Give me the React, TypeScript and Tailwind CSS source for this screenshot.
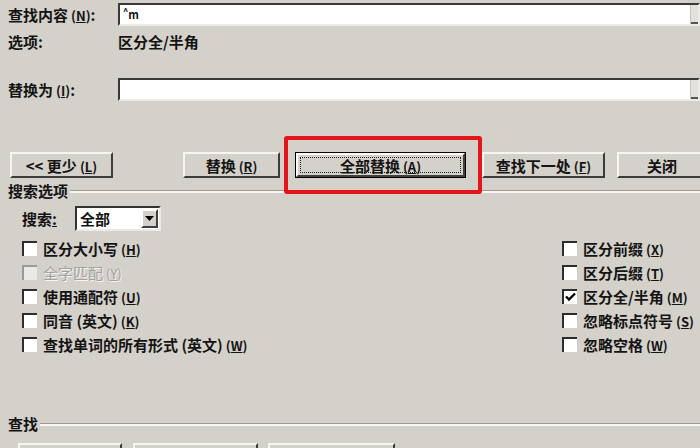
import React from "react";

// Classic Windows "查找和替换" dialog, scaled-up screenshot look.

function Key({ k }: { k: string }) {
  return (
    <span className="ml-[3px] text-[13px]">
      (<span className="underline">{k}</span>)
    </span>
  );
}

function Field({ children }: { children?: React.ReactNode }) {
  return (
    <div className="flex h-[23px] flex-1 items-stretch border-2 border-t-[#3a3a3a] border-l-[#3a3a3a] border-b-[#ecebe8] border-r-[#ecebe8] bg-white">
      <div className="flex flex-1 items-center pl-[3px] text-[11px] leading-none">{children}</div>
      <div className="w-[8px] border-l border-[#c8c4bc] bg-[#e4e1dc] shadow-[inset_0_-2px_0_#555]" />
    </div>
  );
}

function Btn({
  children,
  w,
  def,
}: {
  children: React.ReactNode;
  w: string;
  def?: boolean;
}) {
  if (def) {
    return (
      <div className={`flex h-[26px] ${w} border border-black`}>
        <div className="flex flex-1 border-2 border-t-white border-l-white border-b-[#404040] border-r-[#404040] p-[2px]">
          <div className="flex flex-1 items-center justify-center border border-dotted border-[#222]">
            {children}
          </div>
        </div>
      </div>
    );
  }
  return (
    <div
      className={`flex h-[26px] ${w} items-center justify-center border-2 border-t-[#f6f5f2] border-l-[#f6f5f2] border-b-[#3c3c3c] border-r-[#3c3c3c]`}
    >
      {children}
    </div>
  );
}

function Check({
  label,
  k,
  checked,
  disabled,
}: {
  label: string;
  k: string;
  checked?: boolean;
  disabled?: boolean;
}) {
  return (
    <div className="flex h-[24px] items-center">
      <div
        className={`flex h-[15px] w-[15px] items-center justify-center border-2 border-b-0 border-r-0 ${
          disabled ? "border-[#9a9a9a] bg-[#ebe9e4]" : "border-[#2e2e2e] bg-white"
        }`}
      >
        {checked && (
          <svg width="11" height="10" viewBox="0 0 11 10">
            <path d="M1 4.5 L4 7.5 L10 1.5" stroke="#000" strokeWidth="2.4" fill="none" />
          </svg>
        )}
      </div>
      <span
        className={`ml-[6px] whitespace-nowrap ${
          disabled ? "font-normal text-[#a3a19c] [text-shadow:1px_1px_0_#f4f3f0]" : ""
        }`}
      >
        {label}
        <Key k={k} />
      </span>
    </div>
  );
}

function Group({ title }: { title: string }) {
  return (
    <div className="flex h-[20px] items-center pl-2">
      <span className="whitespace-nowrap">{title}</span>
      <div className="ml-[2px] mt-[2px] h-[3px] flex-1 border-t border-b-2 border-t-[#9c9994] border-b-[#f7f6f3]" />
    </div>
  );
}

export default function App() {
  return (
    <div className="relative h-[448px] w-[700px] overflow-hidden bg-[#d4d0ca] pt-[3px] font-['Noto_Sans_CJK_SC',sans-serif] text-[15px] font-semibold leading-none text-[#141414]">
      {/* 查找内容 */}
      <div className="flex h-[23px] items-center pl-2">
        <span className="w-[110px] whitespace-nowrap">
          查找内容<Key k="N" />:
        </span>
        <Field>
          <span className="-mt-[6px] text-[9px]">^</span>
          <span className="text-[11px] font-bold">m</span>
        </Field>
      </div>

      <div className="mt-[4px] flex h-[22px] items-center pl-2">
        <span className="w-[110px]">选项:</span>
        <span>区分全/半角</span>
      </div>

      {/* 替换为 */}
      <div className="mt-[26px] flex h-[23px] items-center pl-2">
        <span className="w-[110px] whitespace-nowrap">
          替换为<Key k="I" />:
        </span>
        <Field />
      </div>

      {/* buttons */}
      <div className="mt-[51px] flex h-[26px] items-center">
        <div className="ml-[10px]">
          <Btn w="w-[103px]">
            <span>&lt;&lt; 更少<Key k="L" /></span>
          </Btn>
        </div>
        <div className="ml-[70px]">
          <Btn w="w-[97px]">
            <span>替换<Key k="R" /></span>
          </Btn>
        </div>
        <div className="ml-[15px]">
          <Btn w="w-[171px]" def>
            <span>全部替换<Key k="A" /></span>
          </Btn>
        </div>
        <div className="ml-[16px]">
          <Btn w="w-[123px]">
            <span>查找下一处<Key k="F" /></span>
          </Btn>
        </div>
        <div className="ml-[12px]">
          <Btn w="w-[90px]">
            <span>关闭</span>
          </Btn>
        </div>
      </div>

      {/* 搜索选项 */}
      <div className="mt-[2px]">
        <Group title="搜索选项" />
      </div>

      <div className="mt-[6px] flex h-[25px] items-center pl-[22px]">
        <span className="w-[53px]">
          搜索<span className="underline">:</span>
        </span>
        <div className="flex h-[25px] w-[86px] items-stretch border-2 border-t-[#333] border-l-[#333] border-b-[#eceae6] border-r-[#eceae6] bg-white">
          <div className="flex flex-1 items-center pl-[3px]">全部</div>
          <div className="m-[1px] flex w-[17px] items-center justify-center border-2 border-t-white border-l-white border-b-[#404040] border-r-[#404040] bg-[#d4d0ca]">
            <svg width="9" height="5" viewBox="0 0 9 5">
              <path d="M0 0 H9 L4.5 5 Z" fill="#000" />
            </svg>
          </div>
        </div>
      </div>

      <div className="mt-[5px] flex">
        <div className="flex-1 pl-[22px]">
          <Check label="区分大小写" k="H" />
          <Check label="全字匹配" k="Y" disabled />
          <Check label="使用通配符" k="U" />
          <Check label="同音 (英文)" k="K" />
          <Check label="查找单词的所有形式 (英文)" k="W" />
        </div>
        <div className="w-[138px]">
          <Check label="区分前缀" k="X" />
          <Check label="区分后缀" k="T" />
          <Check label="区分全/半角" k="M" checked />
          <Check label="忽略标点符号" k="S" />
          <Check label="忽略空格" k="W" />
        </div>
      </div>

      {/* 查找 */}
      <div className="mt-[57px]">
        <Group title="查找" />
      </div>
      <div className="mt-[10px] flex">
        <div className="ml-[18px]">
          <Btn w="w-[104px]">
            <span />
          </Btn>
        </div>
        <div className="ml-[11px]">
          <Btn w="w-[125px]">
            <span />
          </Btn>
        </div>
        <div className="ml-[10px]">
          <Btn w="w-[127px]">
            <span />
          </Btn>
        </div>
      </div>

      {/* red highlight around 全部替换 */}
      <div className="pointer-events-none absolute left-[284px] top-[136px] h-[58px] w-[198px] rounded-[3px] border-4 border-[#e3151a]" />
    </div>
  );
}
